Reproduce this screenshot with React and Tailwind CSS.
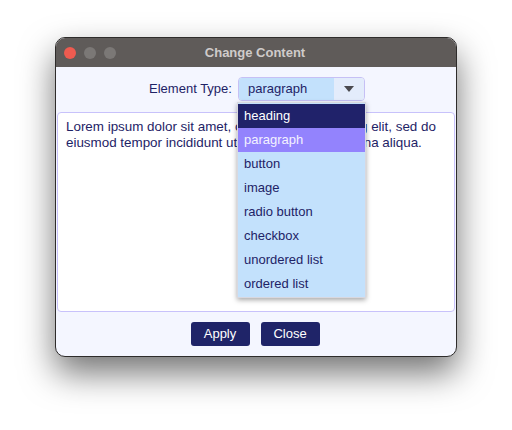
import React from 'react';

const OPTIONS = ['heading', 'paragraph', 'button', 'image', 'radio button', 'checkbox', 'unordered list', 'ordered list'];

export default function App() {
    return (
        <div className="w-[512px] h-[430px] bg-white overflow-hidden pt-[37px] pl-[55px]" style={{ fontFamily: '"Liberation Sans", Arial, sans-serif' }}>
            {/* Window */}
            <div className="w-[402px] h-[320px] rounded-[10px] border border-[#2e2c2b] bg-[#f4f6ff] shadow-[0_16px_34px_rgba(0,0,0,0.55)] flex flex-col overflow-hidden">
                {/* Title bar */}
                <div className="relative h-[29px] bg-[#5f5b59] flex items-center justify-center shrink-0">
                    <div className="absolute left-[8px] top-[9px] flex gap-[8px]">
                        <span className="w-[12px] h-[12px] rounded-full bg-[#ee5b50]"></span>
                        <span className="w-[12px] h-[12px] rounded-full bg-[#7b7876]"></span>
                        <span className="w-[12px] h-[12px] rounded-full bg-[#7b7876]"></span>
                    </div>
                    <span className="text-[13px] font-bold text-[#cfcbca] pr-[2px]">Change Content</span>
                </div>

                {/* Body */}
                <div className="relative flex-1 flex flex-col">
                    <div className="flex items-center justify-center gap-[6px] pt-[10px] pl-[2px]">
                        <span className="text-[13px] text-[#1e2366]">Element Type:</span>
                        <div className="w-[127px] h-[24px] flex rounded-[4px] border border-[#c6c0f5] overflow-hidden">
                            <div className="flex-1 bg-[#c3e1fc] flex items-center pl-[9px] text-[13px] text-[#1e2366]">paragraph</div>
                            <div className="w-[30px] bg-[#e3ecfb] flex items-center justify-center">
                                <svg width="10" height="6" viewBox="0 0 10 6">
                                    <path d="M0 0 L10 0 L5 6 Z" fill="#4a4a4f" />
                                </svg>
                            </div>
                        </div>
                    </div>

                    {/* Text area */}
                    <div className="mt-[11px] mx-[1px] h-[200px] bg-white border border-[#c8c2fb] rounded-[4px] pl-[8px] pr-[6px] pt-[6px] text-[13.4px] leading-[16px] text-[#1e2366]">
                        Lorem ipsum dolor sit amet, consectetur adipiscing elit, sed do eiusmod tempor incididunt ut labore et dolore magna aliqua.
                    </div>

                    {/* Buttons */}
                    <div className="flex justify-center gap-[11px] mt-[10px] pr-[2px]">
                        <button className="w-[59px] h-[24px] rounded-[3px] bg-[#1f2468] text-white text-[13px]">Apply</button>
                        <button className="w-[59px] h-[24px] rounded-[3px] bg-[#1f2468] text-white text-[13px]">Close</button>
                    </div>

                    {/* Dropdown list */}
                    <div className="absolute left-[181px] top-[35px] w-[129px] border border-[#d8d8e0] bg-[#c3e1fc] shadow-[0_2px_5px_rgba(0,0,0,0.35)] py-[1px]">
                        {OPTIONS.map((o, i) => (
                            <div
                                key={o}
                                className={
                                    i === 0
                                        ? 'h-[24px] flex items-center pl-[6px] text-[13px] bg-[#20226a] text-white'
                                        : i === 1
                                            ? 'h-[24px] flex items-center pl-[6px] text-[13px] bg-[#9383fd] text-[#f4f2ff]'
                                            : 'h-[24px] flex items-center pl-[6px] text-[13px] text-[#1e2366]'
                                }
                            >
                                {o}
                            </div>
                        ))}
                    </div>
                </div>
            </div>
        </div>
    );
}
